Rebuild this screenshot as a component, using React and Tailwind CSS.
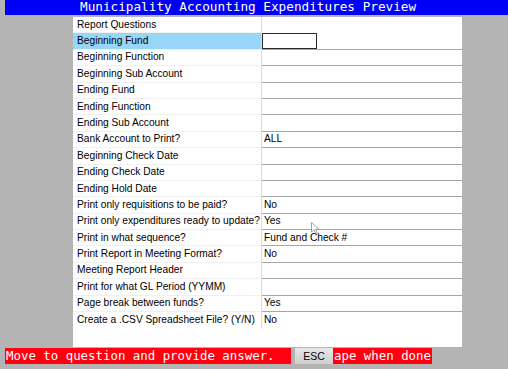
const rows = [
  ['Report Questions', ''],
  ['Beginning Fund', ''],
  ['Beginning Function', ''],
  ['Beginning Sub Account', ''],
  ['Ending Fund', ''],
  ['Ending Function', ''],
  ['Ending Sub Account', ''],
  ['Bank Account to Print?', 'ALL'],
  ['Beginning Check Date', ''],
  ['Ending Check Date', ''],
  ['Ending Hold Date', ''],
  ['Print only requisitions to be paid?', 'No'],
  ['Print only expenditures ready to update?', 'Yes'],
  ['Print in what sequence?', 'Fund and Check #'],
  ['Print Report in Meeting Format?', 'No'],
  ['Meeting Report Header', ''],
  ['Print for what GL Period (YYMM)', ''],
  ['Page break between funds?', 'Yes'],
  ['Create a .CSV Spreadsheet File? (Y/N)', 'No'],
]

function Row({ label, value, index }) {
  const last = index === rows.length - 1
  const selected = index === 1
  const lined = index > 0 && !last
  return (
    <div className="flex h-[16.4px]">
      <div
        className={`flex w-[189px] shrink-0 items-center whitespace-nowrap border-r border-[#dcdcdc] pl-[4px] ${
          selected ? 'bg-[#97d6f6]' : 'bg-white'
        } ${last ? '' : 'border-b border-b-[#f0f0f0]'}`}
      >
        {label}
      </div>
      <div
        className={`flex flex-1 items-center bg-white ${
          lined ? 'border-b border-[#a6a6a6]' : ''
        }`}
      >
        {selected ? (
          <div className="h-full w-[55px] border border-[#2a2a2a] bg-white" />
        ) : (
          <span className="pl-[2px]">{value}</span>
        )}
      </div>
    </div>
  )
}

export default function App() {
  return (
    <div className="relative flex h-[369px] w-[508px] flex-col overflow-hidden bg-[#b4b4b4]">
      {/* title */}
      <div className="ml-[5px] flex h-[15px] items-center bg-[#0000f6] pl-[75px] font-['DejaVu_Sans_Mono',monospace] text-[12.7px] leading-none text-white">
        Municipality Accounting Expenditures Preview
      </div>

      {/* questions */}
      <div className="mt-[2px] ml-[73px] flex h-[330px] w-[389px] flex-col bg-white font-['Liberation_Sans',Arial,sans-serif] text-[10.2px] leading-none text-black">
        {rows.map(([label, value], i) => (
          <Row key={label} label={label} value={value} index={i} />
        ))}
      </div>

      {/* status line */}
      <div className="mt-[1px] ml-[5px] flex h-[16px] items-stretch whitespace-nowrap font-['DejaVu_Sans_Mono',monospace] text-[12.4px] leading-none text-white">
        <div className="flex w-[286px] items-center bg-[#ff0010] pl-[1px]">
          Move to question and provide answer.
        </div>
        <div className="ml-[4px] flex w-[38px] items-center justify-center bg-gradient-to-b from-[#e6e6e6] to-[#cfcfcf] font-['Liberation_Sans',Arial,sans-serif] text-[10.5px] text-black">
          ESC
        </div>
        <div className="flex w-[99px] items-center bg-[#ff0010] pl-[1px]">
          ape when done
        </div>
      </div>

      {/* mouse pointer */}
      <svg
        className="absolute left-[311px] top-[222px]"
        width="9"
        height="13"
        viewBox="0 0 9 13"
      >
        <path
          d="M0.5 0.5 L0.5 10 L3 7.8 L4.8 12 L6.3 11.3 L4.6 7.3 L8 7.3 Z"
          fill="white"
          stroke="#8a8a8a"
          strokeWidth="0.8"
        />
      </svg>
    </div>
  )
}
